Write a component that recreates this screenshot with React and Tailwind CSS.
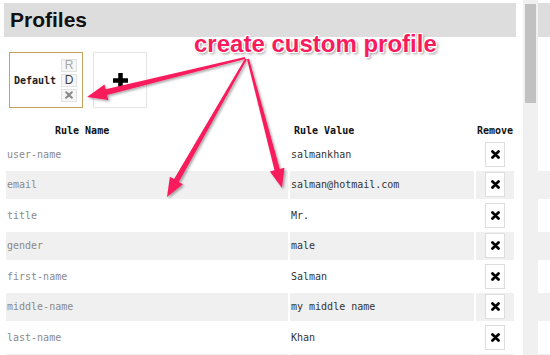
import React from 'react';

const rules = [
  ['user-name', 'salmankhan'],
  ['email', 'salman@hotmail.com'],
  ['title', 'Mr.'],
  ['gender', 'male'],
  ['first-name', 'Salman'],
  ['middle-name', 'my middle name'],
  ['last-name', 'Khan'],
  ['', ''],
];

const mono = 'font-["DejaVu_Sans_Mono","Liberation_Mono",monospace]';

// tapered arrow shape, thin at the start and wide near the head
const arrowPoints = (sx, sy, tx, ty, w0, w1, hl, hw) => {
  const dx = tx - sx;
  const dy = ty - sy;
  const len = Math.hypot(dx, dy);
  const ux = dx / len;
  const uy = dy / len;
  const nx = -uy;
  const ny = ux;
  const bx = tx - ux * hl;
  const by = ty - uy * hl;
  const pts = [
    [sx + (nx * w0) / 2, sy + (ny * w0) / 2],
    [bx + (nx * w1) / 2, by + (ny * w1) / 2],
    [bx + (nx * hw) / 2, by + (ny * hw) / 2],
    [tx, ty],
    [bx - (nx * hw) / 2, by - (ny * hw) / 2],
    [bx - (nx * w1) / 2, by - (ny * w1) / 2],
    [sx - (nx * w0) / 2, sy - (ny * w0) / 2],
  ];
  return pts.map((p) => p.map((v) => v.toFixed(1)).join(',')).join(' ');
};

const RemoveButton = () => (
  <div className="w-[20px] h-[25px] bg-white border border-[#dddddd] flex items-center justify-center">
    <svg width="9" height="9" viewBox="0 0 9 9">
      <path d="M1.5 1.5 L7.5 7.5 M7.5 1.5 L1.5 7.5" stroke="#000" strokeWidth="2.8" strokeLinecap="round" />
    </svg>
  </div>
);

const Annotation = () => (
  <>
    <svg className="absolute left-0 top-0 pointer-events-none" width="550" height="355">
      <defs>
        <filter id="shadow" x="-20%" y="-20%" width="140%" height="140%">
          <feDropShadow dx="1.5" dy="1.5" stdDeviation="1.2" floodColor="#000" floodOpacity="0.35" />
        </filter>
      </defs>
      <g fill="#f81b5d" filter="url(#shadow)">
        <polygon points={arrowPoints(245, 58, 87, 97, 2, 6, 20, 16)} />
        <polygon points={arrowPoints(246, 59, 167, 197, 2, 5.5, 19, 15)} />
        <polygon points={arrowPoints(248, 59, 282, 188, 2, 5.5, 19, 15)} />
      </g>
    </svg>
    <div className="absolute left-[194px] top-[31px] text-[24px] leading-[26px] font-bold text-[#f81b5d] font-['Liberation_Sans',Arial,sans-serif] whitespace-nowrap [text-shadow:-1px_-1px_0_#fff,1px_-1px_0_#fff,-1px_1px_0_#fff,1px_1px_0_#fff,0_-1px_0_#fff,0_1px_0_#fff,2px_2px_3px_rgba(0,0,0,0.45)]">
      create custom profile
    </div>
  </>
);

export default function App() {
  return (
    <div className="relative w-[550px] h-[355px] overflow-hidden bg-white flex">
      {/* main panel */}
      <div className="ml-[4px] mt-[3px] w-[512px] shrink-0">
        <div className="h-[34px] bg-[#dddddd] flex items-center px-[6px]">
          <h1 className="text-[21px] leading-[24px] font-bold text-[#111] font-['Liberation_Sans',Arial,sans-serif]">Profiles</h1>
        </div>

        {/* profile cards */}
        <div className="flex gap-[10px] pl-[5px] mt-[15px]">
          <div className="w-[74px] h-[56px] border border-[#c9a15c] flex items-center justify-between pl-[4px] pr-[5px]">
            <span className={`${mono} text-[10px] font-bold text-[#222]`}>Default</span>
            <div className="flex flex-col gap-[2px]">
              <div className="w-[16px] h-[13px] border border-[#e2e2e2] bg-[#f6f6f6] flex items-center justify-center text-[12px] leading-none text-[#a8a8a8] font-['Liberation_Sans',Arial,sans-serif]">R</div>
              <div className="w-[16px] h-[13px] border border-[#e2e2e2] bg-[#f6f6f6] flex items-center justify-center text-[12px] leading-none text-[#444] font-['Liberation_Sans',Arial,sans-serif]">D</div>
              <div className="w-[16px] h-[13px] border border-[#e2e2e2] bg-[#f6f6f6] flex items-center justify-center">
                <svg width="8" height="8" viewBox="0 0 8 8">
                  <path d="M1.2 1.2 L6.8 6.8 M6.8 1.2 L1.2 6.8" stroke="#8a8a8a" strokeWidth="2" strokeLinecap="round" />
                </svg>
              </div>
            </div>
          </div>
          <div className="w-[54px] h-[56px] border border-[#e6e6e6] flex items-center justify-center">
            <svg width="17" height="17" viewBox="0 0 17 17">
              <path d="M8.5 1 V16 M1 8.5 H16" stroke="#000" strokeWidth="4.5" />
            </svg>
          </div>
        </div>

        {/* rules table */}
        <div className={`${mono} text-[10px] mt-[15px] pl-[2px]`}>
          <div className="grid grid-cols-[282px_184px_38px] gap-x-[2px] h-[15px] items-center font-bold text-[#111]">
            <div className="pl-[49px]">Rule Name</div>
            <div className="pl-[4px]">Rule Value</div>
            <div className="text-center">Remove</div>
          </div>
          <div className="grid grid-cols-[282px_184px_38px] gap-x-[2px] gap-y-[2px] mt-[2px]">
            {rules.map(([name, value], i) => (
              <React.Fragment key={i}>
                <div className={`h-[28.5px] flex items-center pl-[1px] text-[#8a8a8a] ${i % 2 ? 'bg-[#f0f0f0]' : ''}`}>{name}</div>
                <div className={`h-[28.5px] flex items-center pl-[1px] text-[#333] ${i % 2 ? 'bg-[#f0f0f0]' : ''}`}>{value}</div>
                <div className={`h-[28.5px] flex items-center justify-center ${i % 2 ? 'bg-[#f0f0f0]' : ''}`}>
                  {name && <RemoveButton />}
                </div>
              </React.Fragment>
            ))}
          </div>
        </div>
      </div>

      {/* scrollbar */}
      <div className="ml-[7px] w-[15px] h-full bg-[#f0f0f0] shrink-0 pt-[4px] px-[2px]">
        <div className="h-[99px] bg-[#c1c1c1]" />
      </div>

      {/* next panel, cut off */}
      <div className="flex-1 mt-[3px]">
        <div className="h-[34px] bg-[#dddddd]" />
        <div className="mt-[103px] flex flex-col gap-y-[2px]">
          {rules.map((r, i) => (
            <div key={i} className={`h-[28.5px] ${i % 2 ? 'bg-[#f0f0f0]' : ''}`} />
          ))}
        </div>
      </div>

      <Annotation />
    </div>
  );
}
